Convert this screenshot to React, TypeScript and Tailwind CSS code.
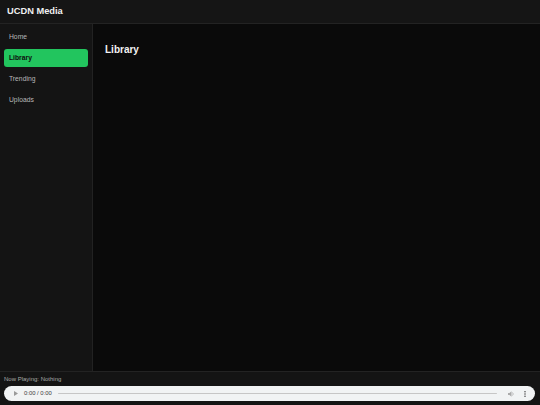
import React from "react";

const font = { fontFamily: '"Liberation Sans", Arial, sans-serif' };

export default function App() {
  const items = ["Home", "Library", "Trending", "Uploads"];
  return (
    <div className="w-[540px] h-[405px] flex flex-col bg-[#0b0b0b] text-white overflow-hidden" style={font}>
      <header className="h-[24px] shrink-0 flex items-center px-[7px] bg-[#151515] border-b border-[#232323]">
        <span className="text-[9.3px] font-bold leading-none text-[#f0f0f0]">UCDN Media</span>
      </header>
      <div className="flex flex-1 min-h-0">
        <aside className="w-[93px] shrink-0 bg-[#141414] border-r border-[#222222] p-[4px] pt-[4px] flex flex-col gap-[3px]">
          {items.map((it) =>
            it === "Library" ? (
              <div key={it} className="h-[18px] rounded-[3px] bg-[#22c55e] flex items-center pl-[5px] text-[6.75px] font-bold text-[#0d0d0d]">
                {it}
              </div>
            ) : (
              <div key={it} className="h-[18px] flex items-center pl-[5px] text-[6.75px] text-[#b8b8b8]">
                {it}
              </div>
            )
          )}
        </aside>
        <main className="flex-1 bg-[#0a0a0a] pl-[12px] pt-[20px]">
          <h1 className="text-[10px] font-bold leading-[12px] text-[#f2f2f2]">Library</h1>
        </main>
      </div>
      <footer className="h-[34px] shrink-0 bg-[#141414] border-t border-[#232323] flex flex-col px-[4px]">
        <div className="h-[14px] flex items-center text-[6px] text-[#a8a8a8] leading-none pb-[1px]">Now Playing: Nothing</div>
        <div className="h-[15px] w-[531px] rounded-full bg-[#f1f3f4] flex items-center">
          <svg width="4" height="5" viewBox="0 0 4 5" className="ml-[10px]">
            <path d="M0 0 L4 2.5 L0 5 Z" fill="#9a9a9a" />
          </svg>
          <span className="ml-[6px] text-[5.9px] text-[#3a3a3a] leading-none">0:00 / 0:00</span>
          <div className="ml-[6px] w-[439px] h-[1.5px] bg-[#c6c6c6] rounded-full" />
          <svg width="7" height="6" viewBox="0 0 7 6" className="ml-[11px]">
            <path d="M0 2 H1.5 L3.5 0.3 V5.7 L1.5 4 H0 Z" fill="#aaaaaa" />
            <path d="M4.5 1.5 Q6 3 4.5 4.5" stroke="#aaaaaa" strokeWidth="0.8" fill="none" />
          </svg>
          <svg width="2" height="6" viewBox="0 0 2 6" className="ml-[9px]">
            <circle cx="1" cy="0.8" r="0.7" fill="#333" />
            <circle cx="1" cy="3" r="0.7" fill="#333" />
            <circle cx="1" cy="5.2" r="0.7" fill="#333" />
          </svg>
        </div>
      </footer>
    </div>
  );
}
